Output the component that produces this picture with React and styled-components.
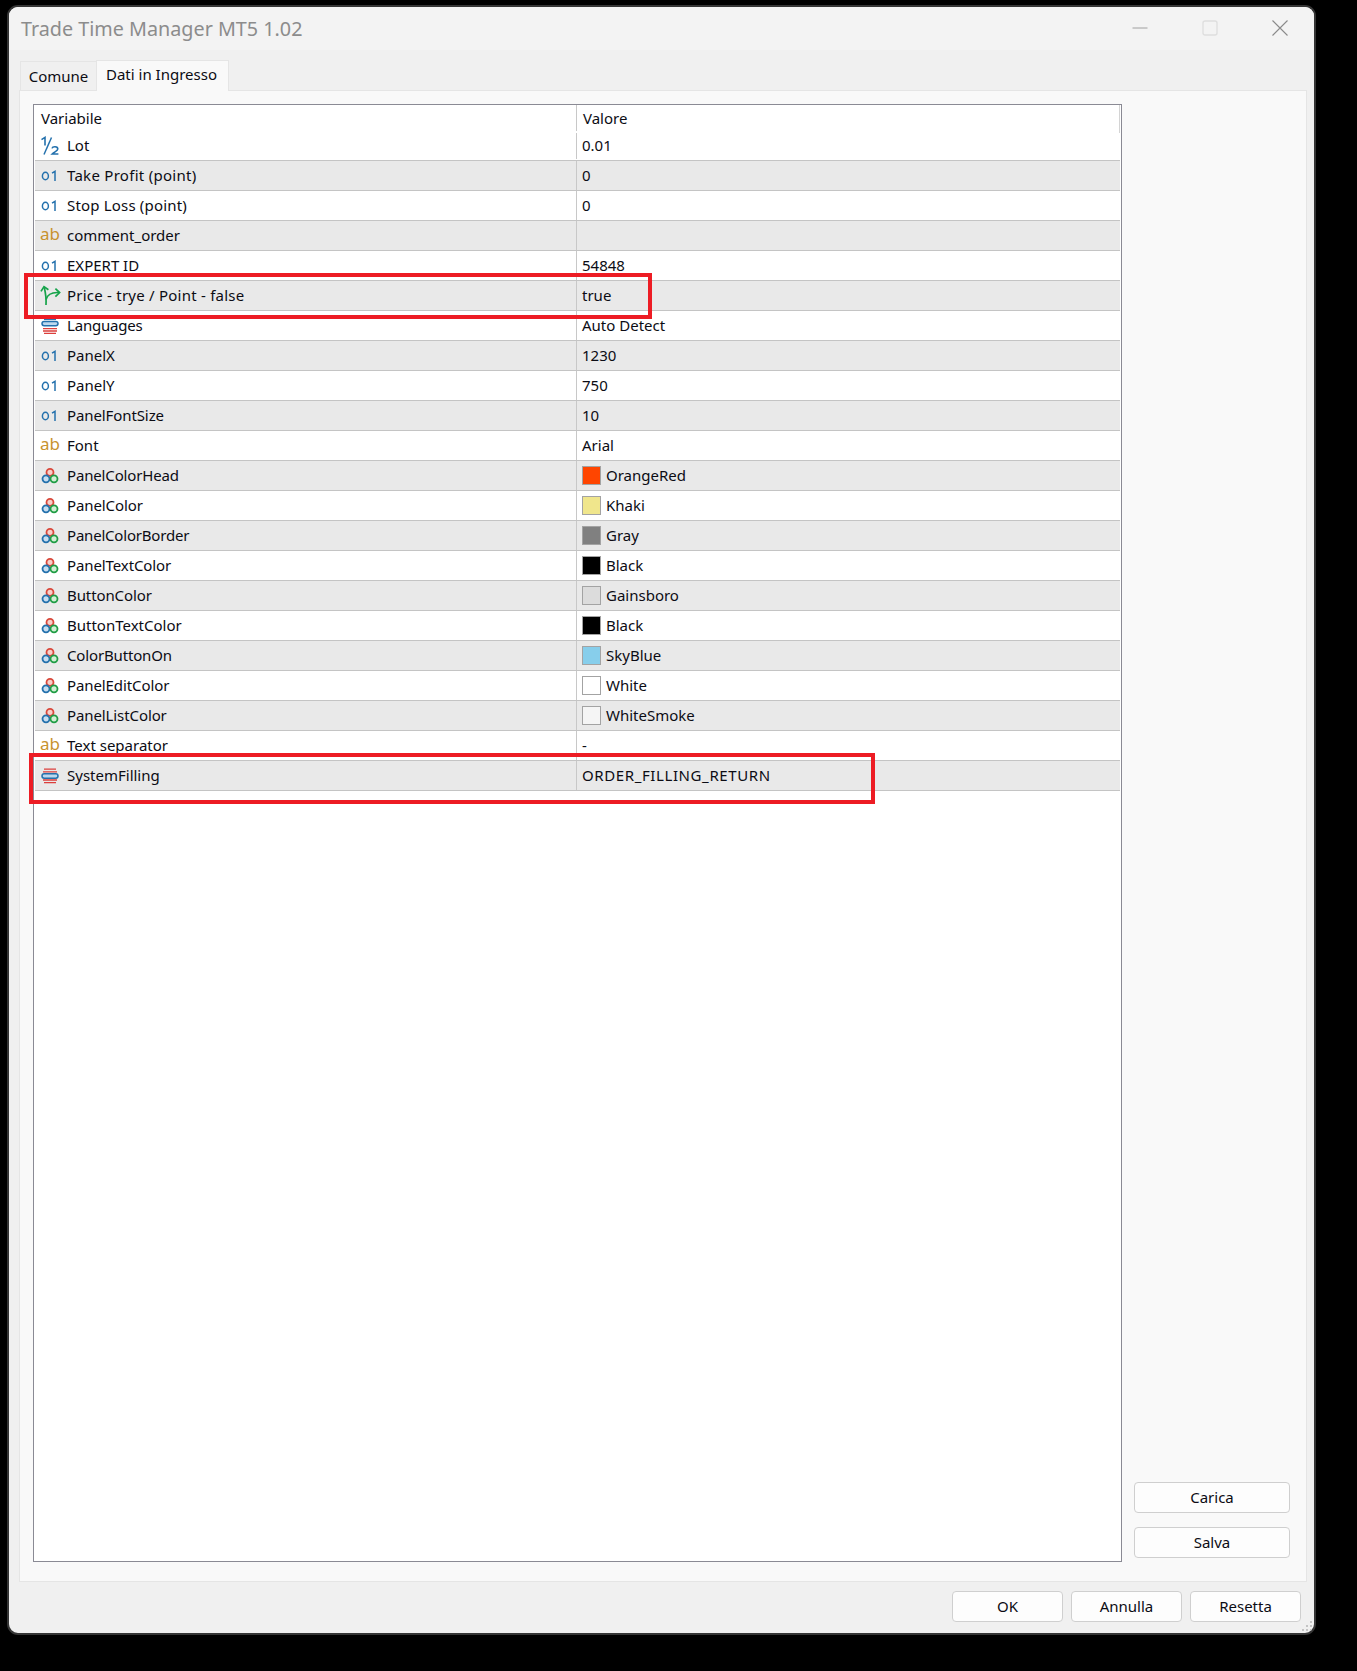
import styled, { createGlobalStyle } from 'styled-components'

const GlobalStyle = createGlobalStyle`
  html, body {
    margin: 0;
    padding: 0;
    background: #000;
  }
  body {
    width: 1357px;
    height: 1671px;
    overflow: hidden;
    font-family: "Noto Sans", "Open Sans", sans-serif;
    font-size: 15px;
    color: #0c0c14;
  }
`

const Window = styled.div`
  position: relative;
  box-sizing: border-box;
  margin: 5px 0 0 7px;
  width: 1309px;
  height: 1630px;
  border: 2px solid #353535;
  border-radius: 11px;
  background: #f0f0f0;
  display: flex;
  flex-direction: column;
  overflow: hidden;
`

const TitleBar = styled.div`
  height: 43px;
  flex: none;
  background: #f3f3f3;
  display: flex;
  align-items: center;
  padding: 0 26px 0 12px;
`

const Title = styled.div`
  flex: 1;
  font-size: 19.75px;
  color: #8c8c8c;
`

const Controls = styled.div`
  display: flex;
  align-items: center;
  gap: 54px;
  margin-top: -1px;
`

const TabStrip = styled.div`
  height: 40px;
  flex: none;
  display: flex;
  align-items: flex-end;
  padding-left: 11px;
`

const Tab = styled.div`
  box-sizing: border-box;
  display: flex;
  align-items: center;
  justify-content: center;
  height: ${p => (p.$active ? 31 : 29)}px;
  width: ${p => (p.$active ? 133 : 76)}px;
  background: ${p => (p.$active ? '#f9f9f9' : '#f0f0f0')};
  border: 1px solid #e5e5e5;
  border-bottom: none;
  border-right: ${p => (p.$active ? '1px solid #e5e5e5' : 'none')};
  padding-bottom: ${p => (p.$active ? 4 : 0)}px;
  padding-right: ${p => (p.$active ? 2 : 0)}px;
  margin-bottom: ${p => (p.$active ? -1 : 0)}px;
  position: relative;
  z-index: 1;
`

const Panel = styled.div`
  box-sizing: border-box;
  width: 1288px;
  height: 1492px;
  margin-left: 10px;
  flex: none;
  background: #f9f9f9;
  border: 1px solid #e5e5e5;
  padding: 13px 0 0 13px;
  display: flex;
  gap: 12px;
`

const Table = styled.div`
  position: relative;
  box-sizing: border-box;
  width: 1089px;
  height: 1458px;
  flex: none;
  background: #fff;
  border: 1px solid #8a8a94;
  padding: 0 1px;
`

const HeaderRow = styled.div`
  display: grid;
  grid-template-columns: 541px 1fr;
  height: 26px;
  line-height: 26px;
  padding-bottom: 2px;
  border-right: 1px solid #d4d4d4;
`

const HeaderCell = styled.div`
  padding-left: 6px;
  border-left: ${p => (p.$value ? '1px solid #c8c8c8' : 'none')};
`

const Row = styled.div`
  box-sizing: border-box;
  display: grid;
  grid-template-columns: 541px 1fr;
  height: ${p => (p.$first ? 28 : 30)}px;
  padding-bottom: ${p => (p.$first ? 1 : 0)}px;
  background: ${p => (p.$shaded ? '#e9e9e9' : '#fff')};
  border-bottom: 1px solid #c4c4c4;
`

const NameCell = styled.div`
  display: flex;
  align-items: center;
  gap: 8px;
  padding-left: 6px;
  white-space: nowrap;
`

const ValueCell = styled.div`
  display: flex;
  align-items: center;
  gap: 5px;
  padding-left: 5px;
  border-left: 1px solid #c8c8c8;
  white-space: nowrap;
`

const CellText = styled.span`
  margin-top: -2px;
  letter-spacing: ${p => p.$track || 0}px;
`

const Swatch = styled.span`
  box-sizing: border-box;
  width: 19px;
  height: 19px;
  flex: none;
  background: ${p => p.$color};
  border: 1px solid #a3a3a3;
`

const IconBox = styled.span`
  width: 18px;
  height: 18px;
  flex: none;
  display: flex;
  align-items: center;
  justify-content: center;

  svg {
    flex: none;
  }
`

const AbGlyph = styled.span`
  font-size: 17px;
  line-height: 18px;
  color: #c8922e;
  margin-top: -3px;
`

const Side = styled.div`
  width: 156px;
  height: 1454px;
  display: flex;
  flex-direction: column;
  justify-content: flex-end;
  gap: 14px;
`

const Button = styled.div`
  box-sizing: border-box;
  height: 31px;
  padding-bottom: 2px;
  width: ${p => (p.$wide ? 156 : 111)}px;
  display: flex;
  align-items: center;
  justify-content: center;
  background: #fdfdfd;
  border: 1px solid #cfcfcf;
  border-radius: 4px;
`

const Footer = styled.div`
  flex: 1;
  display: flex;
  justify-content: flex-end;
  gap: 8px;
  padding: 9px 13px 0 0;
`

const RedBox = styled.div`
  position: absolute;
  box-sizing: border-box;
  left: ${p => p.$x}px;
  top: ${p => p.$y}px;
  width: ${p => p.$w}px;
  height: ${p => p.$h}px;
  border: 4.5px solid #ed1c24;
  z-index: 5;
`

const Grip = styled.svg`
  position: absolute;
  right: 1px;
  bottom: 1px;
`

const IntIcon = () => (
  <svg width="18" height="18" viewBox="0 0 18 18" fill="none" stroke="#2471ad" strokeWidth="1.5">
    <ellipse cx="4.4" cy="9" rx="3" ry="3.7" />
    <path d="M11 6.2 14 4.4 V14" />
  </svg>
)

const FractionIcon = () => (
  <svg width="20" height="20" viewBox="0 0 20 20" fill="none" stroke="#2471ad" strokeWidth="1.6">
    <path d="M1.5 3.6 5 1.4 V9.5" />
    <path d="M4 18.5 11.5 1.5" strokeWidth="1.5" />
    <path d="M12 12.4 C12.6 10.2 17.8 10.2 17.8 13 C17.8 15 14 16.2 12.2 18 H18.4" />
  </svg>
)

const BoolIcon = () => (
  <svg width="21" height="21" viewBox="0 0 21 21" fill="none" stroke="#16a34a" strokeWidth="1.7">
    <path d="M6 20 C6.4 14 5.6 8 4.2 2" />
    <path d="M1 6.4 4 1.6 8.4 4.8" />
    <path d="M6 14.5 C7.5 9.5 12 7 19.4 7.6" />
    <path d="M15.4 3.6 19.6 7.6 15.4 11.6" />
  </svg>
)

const EnumIcon = ({ $middle }) => (
  <svg width="18" height="18" viewBox="0 0 18 18" fill="none">
    {$middle && <path d="M3 2.2 H15 M2 4.8 H16" stroke="#dc3f3c" strokeWidth="1.3" />}
    {!$middle && <path d="M3 2.2 H15" stroke="#2471ad" strokeWidth="1.5" />}
    <rect x="1" y={$middle ? 6.8 : 4.4} width="16" height="4.4" rx="2.2" fill="#bcd8ee" stroke="#2471ad" strokeWidth="1.5" />
    <path d={$middle ? 'M2 13 H16 M3 15.6 H15' : 'M2 11.6 H16 M2 14 H16 M3 16.4 H15'} stroke="#dc3f3c" strokeWidth="1.3" />
  </svg>
)

const ColorIcon = () => (
  <svg width="18" height="18" viewBox="0 0 18 18" strokeWidth="1.8">
    <circle cx="9" cy="5.4" r="3.5" fill="#f8cfc8" stroke="#d9483b" />
    <circle cx="5" cy="11.8" r="3.5" fill="#c8ddf0" stroke="#2471ad" />
    <circle cx="13" cy="11.8" r="3.5" fill="#d2efd4" stroke="#1f9d45" />
  </svg>
)

const icons = {
  int: <IntIcon />,
  frac: <FractionIcon />,
  bool: <BoolIcon />,
  enum: <EnumIcon />,
  enumMid: <EnumIcon $middle />,
  color: <ColorIcon />,
  text: <AbGlyph>ab</AbGlyph>,
}

const rows = [
  { icon: 'frac', name: 'Lot', value: '0.01' },
  { icon: 'int', name: 'Take Profit (point)', value: '0', track: 0.28 },
  { icon: 'int', name: 'Stop Loss (point)', value: '0', track: 0.18 },
  { icon: 'text', name: 'comment_order', value: '' },
  { icon: 'int', name: 'EXPERT ID', value: '54848' },
  { icon: 'bool', name: 'Price - trye / Point - false', value: 'true', track: 0.23 },
  { icon: 'enum', name: 'Languages', value: 'Auto Detect', track: -0.2 },
  { icon: 'int', name: 'PanelX', value: '1230' },
  { icon: 'int', name: 'PanelY', value: '750' },
  { icon: 'int', name: 'PanelFontSize', value: '10', track: -0.1 },
  { icon: 'text', name: 'Font', value: 'Arial' },
  { icon: 'color', name: 'PanelColorHead', value: 'OrangeRed', color: '#ff4500', track: -0.15 },
  { icon: 'color', name: 'PanelColor', value: 'Khaki', color: '#f0e68c', track: -0.1 },
  { icon: 'color', name: 'PanelColorBorder', value: 'Gray', color: '#808080', track: -0.2 },
  { icon: 'color', name: 'PanelTextColor', value: 'Black', color: '#000000', track: -0.1 },
  { icon: 'color', name: 'ButtonColor', value: 'Gainsboro', color: '#dcdcdc', track: -0.1 },
  { icon: 'color', name: 'ButtonTextColor', value: 'Black', color: '#000000' },
  { icon: 'color', name: 'ColorButtonOn', value: 'SkyBlue', color: '#87ceeb', track: -0.15 },
  { icon: 'color', name: 'PanelEditColor', value: 'White', color: '#ffffff', track: -0.1 },
  { icon: 'color', name: 'PanelListColor', value: 'WhiteSmoke', color: '#f5f5f5', track: -0.1 },
  { icon: 'text', name: 'Text separator', value: '-' },
  { icon: 'enumMid', name: 'SystemFilling', value: 'ORDER_FILLING_RETURN', valueTrack: 0.6 },
]

export default function App() {
  return (
    <>
      <GlobalStyle />
      <Window>
        <TitleBar>
          <Title>Trade Time Manager MT5 1.02</Title>
          <Controls>
            <svg width="16" height="16" viewBox="0 0 16 16">
              <path d="M0.5 8 H15.5" stroke="#a0a0a0" strokeWidth="1" />
            </svg>
            <svg width="16" height="16" viewBox="0 0 16 16" fill="none">
              <rect x="1" y="1" width="14" height="14" rx="2" stroke="#dedede" strokeWidth="1.4" />
            </svg>
            <svg width="16" height="16" viewBox="0 0 16 16">
              <path d="M0.5 0.5 L15.5 15.5 M15.5 0.5 L0.5 15.5" stroke="#8a8a8a" strokeWidth="1.1" />
            </svg>
          </Controls>
        </TitleBar>
        <TabStrip>
          <Tab>Comune</Tab>
          <Tab $active>Dati in Ingresso</Tab>
        </TabStrip>
        <Panel>
          <Table>
            <HeaderRow>
              <HeaderCell>Variabile</HeaderCell>
              <HeaderCell $value>Valore</HeaderCell>
            </HeaderRow>
            {rows.map((row, i) => (
              <Row key={row.name} $first={i === 0} $shaded={i % 2 === 1}>
                <NameCell>
                  <IconBox>{icons[row.icon]}</IconBox>
                  <CellText $track={row.track}>{row.name}</CellText>
                </NameCell>
                <ValueCell>
                  {row.color && <Swatch $color={row.color} />}
                  <CellText $track={row.valueTrack}>{row.value}</CellText>
                </ValueCell>
              </Row>
            ))}
          </Table>
          <Side>
            <Button $wide>Carica</Button>
            <Button $wide>Salva</Button>
          </Side>
        </Panel>
        <Footer>
          <Button>OK</Button>
          <Button>Annulla</Button>
          <Button>Resetta</Button>
        </Footer>
        <RedBox $x={15} $y={266} $w={628} $h={46} />
        <RedBox $x={20} $y={746} $w={846} $h={51} />
        <Grip width="12" height="12" viewBox="0 0 12 12" fill="#c4c4c4">
          <rect x="9" y="1" width="2" height="2" />
          <rect x="5" y="5" width="2" height="2" />
          <rect x="9" y="5" width="2" height="2" />
          <rect x="1" y="9" width="2" height="2" />
          <rect x="5" y="9" width="2" height="2" />
          <rect x="9" y="9" width="2" height="2" />
        </Grip>
      </Window>
    </>
  )
}
